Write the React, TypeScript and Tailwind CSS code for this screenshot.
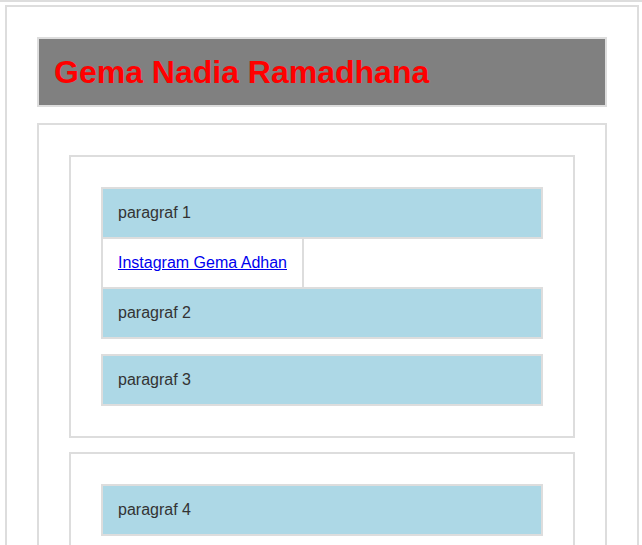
export default function App() {
  const para =
    "border-2 border-[#dddddd] bg-[#add8e6] px-[15px] py-[15px] text-[16px] leading-[18px] text-[#333333]";

  return (
    <div className="min-h-screen bg-white font-['Liberation_Sans',Arial,sans-serif]">
      {/* thin rule at the very top */}
      <div className="h-[2px] w-full bg-[#dddddd]" />

      <div className="ml-[5px] mr-[3px] mt-[3px] border-2 border-[#dddddd] p-[30px]">
        {/* Header */}
        <header className="border-2 border-[#dddddd] bg-[#808080] p-[15px]">
          <h1 className="text-[32px] font-bold leading-[36px] text-[#ff0000]">
            Gema Nadia Ramadhana
          </h1>
        </header>

        {/* Section */}
        <section className="mt-4 border-2 border-[#dddddd] p-[30px]">
          <article className="border-2 border-[#dddddd] p-[30px]">
            <p className={para}>paragraf 1</p>
            <div className="-mt-[2px]">
              <a
                href="#"
                className="inline-block border-2 border-[#dddddd] bg-white px-[15px] py-[15px] align-top text-[16px] leading-[18px] text-[#0000ee] underline"
              >
                Instagram Gema Adhan
              </a>
            </div>
            <p className={`${para} -mt-[2px]`}>paragraf 2</p>
            <p className={`${para} mt-[15px]`}>paragraf 3</p>
          </article>

          <article className="mt-[14px] border-2 border-[#dddddd] p-[30px]">
            <p className={para}>paragraf 4</p>
          </article>
        </section>
      </div>
    </div>
  );
}
